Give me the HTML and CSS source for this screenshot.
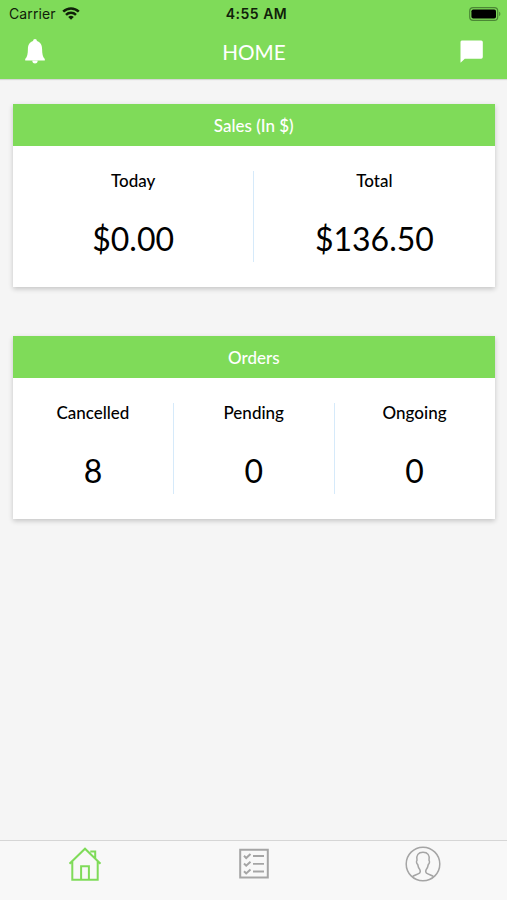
FILE: index.html
```html
<!DOCTYPE html>
<html lang="en">
<head>
<meta charset="utf-8">
<title>Home</title>
<link rel="stylesheet" href="styles.css">
</head>
<body>
<div class="app">
  <header class="top">
    <div class="status">
      <div class="carrier"><span>Carrier</span>
        <svg class="wifi" width="18" height="13" viewBox="0 0 18 13"><g fill="none" stroke="#102009" stroke-width="2.5"><path d="M1.200 4.700a11.200 11.200 0 0 1 15.600 0"/><path d="M4 7.800a7.200 7.200 0 0 1 10 0"/></g><path d="M9 12.800 6.200 10a4 4 0 0 1 5.600 0z" fill="#102009"/></svg>
      </div>
      <div class="clock">4:55 AM</div>
      <svg class="battery" width="32" height="14" viewBox="0 0 32 14"><rect x=".7" y=".7" width="28" height="12.6" rx="3.4" fill="none" stroke="#4b8735" stroke-width="1.2"/><rect x="2.4" y="2.4" width="24.6" height="9.2" rx="1.8"/><path d="M30.200 4.800c1.500.5 1.500 3.900 0 4.400z" fill="#4b8735"/></svg>
    </div>
    <div class="nav">
      <svg width="20" height="25" viewBox="0 0 20 25" fill="#fff"><path d="M10 0c1.200 0 1.900.8 1.900 2.100C15.600 3.200 17 6.200 17.100 10c.1 5 .5 7.900 2.700 9.900v1.500H.2v-1.500C2.400 17.900 2.800 15 2.900 10 3 6.200 4.400 3.200 8.100 2.100 8.100.8 8.800 0 10 0z"/><path d="M7.400 21.400h5.200v1c-.2 1.300-1.200 2-2.600 2s-2.400-.7-2.600-2z"/></svg>
      <h1>HOME</h1>
      <svg width="23" height="23" viewBox="0 0 23 23" fill="#fff"><path d="M1.800.5h19.400q1.600 0 1.600 1.600v15q0 1.600-1.600 1.600H4.800L.5 22.700V2Q.5.500 1.800.5z"/></svg>
    </div>
  </header>
  <main>
    <section class="card">
      <h2>Sales (In $)</h2>
      <div class="stats">
        <div class="stat"><span class="label">Today</span><span class="value">$0.00</span></div>
        <div class="stat"><span class="label">Total</span><span class="value">$136.50</span></div>
      </div>
    </section>
    <section class="card">
      <h2>Orders</h2>
      <div class="stats">
        <div class="stat"><span class="label">Cancelled</span><span class="value">8</span></div>
        <div class="stat"><span class="label">Pending</span><span class="value">0</span></div>
        <div class="stat"><span class="label">Ongoing</span><span class="value">0</span></div>
      </div>
    </section>
  </main>
  <nav class="tabs">
    <a class="tab active"><svg width="36" height="36" viewBox="0 0 36 36"><path d="M2.500 17.700 18 2.700l15.500 15M5.300 15.500v18.200h25.400V15.500M14.100 33.500V20.200h7.800v13.300M23.300 5.500h4.900v6.500"/></svg></a>
    <a class="tab"><svg width="36" height="36" viewBox="0 0 36 36"><path d="M4.200 3.800h27.600v27.600H4.200z"/><path d="M17 10h11M17 17.800h11M17 25.500h11" stroke-width="1.800"/><path d="m8 9.800 2.200 2.200 4.300-4M8 17.500l2.200 2.200 4.300-4M8 25.200l2.200 2.200 4.300-4"/></svg></a>
    <a class="tab thin"><svg width="36" height="36" viewBox="0 0 36 36"><circle cx="18" cy="18" r="16.800"/><path d="M7.300 30.800c2-1.800 4.800-2 7.200-3.600 1-1 .8-2.800.1-4-1.300-1.500-1.600-3-1.900-4.700-1.300-.8-1.500-3.400-.7-4.200-1-5.200 1.300-8 6-8s7 2.800 6 8c.8.800.6 3.400-.7 4.200-.3 1.700-.6 3.200-1.900 4.700-.7 1.200-.9 3 .1 4 2.400 1.600 5.200 1.800 7.200 3.600"/></svg></a>
  </nav>
</div>
</body>
</html>
```
FILE: styles.css
```css
* { box-sizing: border-box; }
body { margin: 0; background: #f5f5f5; font-family: Lato, sans-serif; color: #000; }
.app { width: 507px; height: 900px; display: flex; flex-direction: column; overflow: hidden; }
.top { height: 79px; background: #7fdb59; flex: none; box-shadow: 0 1px 1px rgba(0,0,0,.12); }
.status { height: 27px; padding: 0 6px 0 9px; display: grid; grid-template-columns: 1fr auto 1fr; align-items: center; font-family: Inter, sans-serif; font-size: 14px; color: #102009; }
.carrier { display: flex; align-items: center; gap: 6px; letter-spacing: .1px; }
.clock { font-weight: 600; letter-spacing: .5px; padding-left: 3px; }
.battery { justify-self: end; }
.nav { height: 49px; padding: 0 24px 0 25px; display: grid; grid-template-columns: 1fr auto 1fr; align-items: center; }
.nav svg:last-child { justify-self: end; }
h1 { margin: 0; padding: 1px 0 0; color: #fff; font-size: 20.7px; font-weight: 400; line-height: 26px; }
main { flex: 1; padding: 24.500px 12.500px 0 13px; display: flex; flex-direction: column; gap: 49px; }
.card { height: 183px; background: #fff; box-shadow: 0 2px 5px rgba(0,0,0,.2); }
h2 { margin: 0; height: 42.5px; background: #7fdb59; color: #fff; text-align: center; font-size: 17px; font-weight: 500; line-height: 43px; }
.stats { display: flex; padding-top: 24.500px; }
.stat { flex: 1 1 0; height: 91.500px; display: flex; flex-direction: column; align-items: center; }
.stat + .stat { border-left: 1px solid #d6eafa; }
.label { font-size: 17px; font-weight: 500; line-height: 20px; }
.value { font-size: 32px; line-height: 40px; margin-top: 28px; }
.tabs { height: 60px; border-top: 1px solid #d6d6d6; background: #f8f8f8; display: flex; flex: none; }
.tab { flex: 1; display: flex; justify-content: center; padding-top: 5px; }
.tab svg { fill: none; stroke: #a5a5a5; stroke-width: 2; }
.tab.active svg { stroke: #7fdb59; }
.tab.thin svg { stroke-width: 1.500; }
```
